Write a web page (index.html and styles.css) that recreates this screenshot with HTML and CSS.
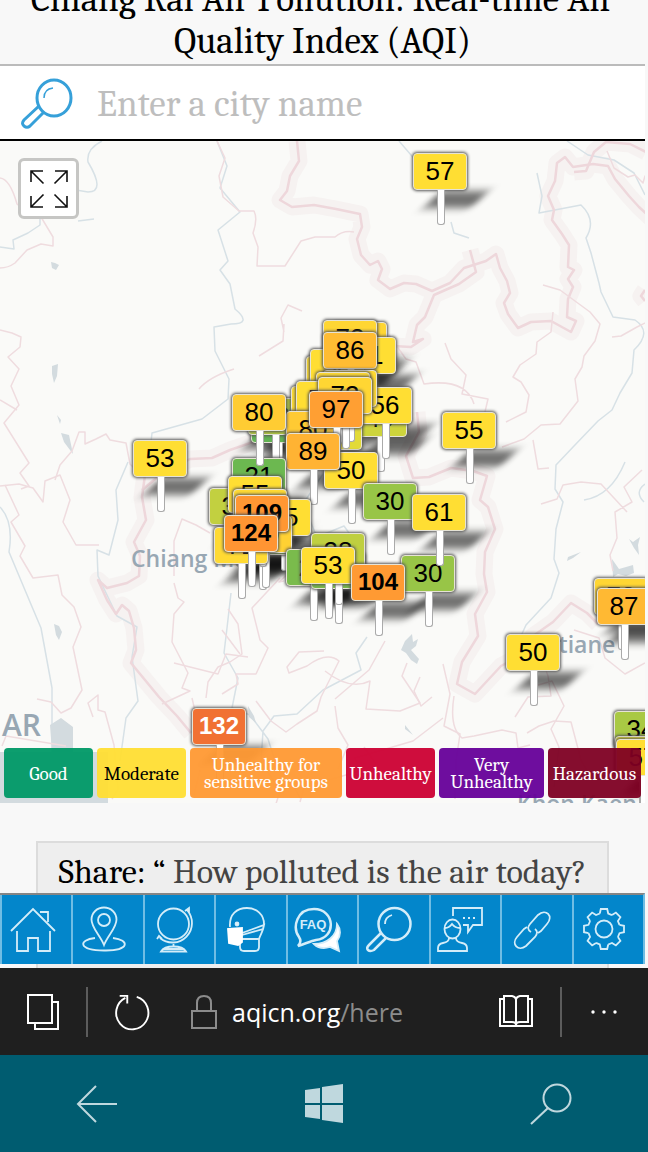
FILE: index.html
```html
<!DOCTYPE html>
<html lang="en">
<head>
<meta charset="utf-8">
<meta name="viewport" content="width=device-width, initial-scale=1">
<title>Chiang Rai Air Pollution: Real-time Air Quality Index (AQI)</title>
<link rel="stylesheet" href="styles.css">
</head>
<body>
<div class="phone">
  <main class="page">
    <header class="title"><h1>Chiang Rai Air Pollution: Real-time Air Quality Index (AQI)</h1></header>

    <form class="search">
      <label for="city" aria-label="City">
        <svg width="52" height="52" viewBox="0 0 52 52" fill="none" stroke="#36a0d9" stroke-width="3">
          <ellipse cx="33" cy="20" rx="17" ry="18"/>
          <path d="M23 34 9 48q-3 2.500-6 0t0-6L18 28"/>
          <path d="M23 20q0-9 9-10" stroke-width="1.500"/>
        </svg>
      </label>
      <input id="city" type="text" placeholder="Enter a city name">
    </form>

    <section class="map" aria-label="Air quality map">
      <svg class="terrain" viewBox="0 141 645 662" preserveAspectRatio="xMinYMin slice" fill="none" stroke-linejoin="round">
        <defs>
          <g id="country">
            <path d="M297 141l2 20-9 15-3 15-7 9 12 7 22-2 22 4 24 5 2 13-5 12 4 16 9 10 8-4 4 8-4 11 12 9 14-6 12 1 16 7 18-8 14-15 22-7 10-7 4 14 7 13 3 12-6 10 4 11 10 14 13-6 20-1 20 11 5-11-9-4 1-18 5-12-5-8 6-9-6-3 1-22-7-11-10-14 2-10-6-14 7-15 2-18 8-6 8 10 20-3 15 2 7 13 14 17 10 11 14 13 6 22q8 10 16-2v-14"/>
            <path d="M574 172l12-1 8-19 12-10 24 2 16 8"/>
            <path d="M470 250l6 22-17 12-25 11-9 22-8 8-4 17 10-3-12 8-36-2"/>
            <path d="M417 412l2 20-13 24 7 22 16-1 22-9 22 3 14 5-7 24 8 7 7 22-10 23-1 22 3 18-12 22 3 22-16 26-5 22 18 10 26-28 22-12 10-18 20-14 18-19 16 10 11 11"/>
            <path d="M145 475l-3 22 4 23-12 22 6 14-1 20-12 7-20 5-9-8 9 20 9 14 6-9 7 6 5 17 2 22-5 13 28 34 18 19 14 17"/>
            <path d="M142 490l18-15 30-16 22-1 18-8 26-9"/>
            <path d="M645 290l-4 6 4 5"/>
          </g>
        </defs>
        <use href="#country" stroke="#f6f2f1" stroke-width="17"/>
        <g stroke="#d7e1e6" stroke-width="1.500">
          <path d="M102 141q-16 8-14 21 18 30 0 30l-12-2m-36 27v8l-12 8-15 7 1 9-14-2m94-28-16 2"/>
          <path d="M217 141l10 25-7 22 20 24-22 18 10 31-8 9 10 14 5 25q18 15-4 15l-17 3 1 24 14 28-1 20-26 20-50 14-2 18"/>
          <path d="M399 141l18 21m34 60 3 11 15 5M567 141l21 14 26 5 20 13 11 22m-108-22 5 23-3 17 42-8q16 15 5 33l5 15 8 30 2 9 12 25 22 3q18 12-1 30l-2 23-12 20-8 17-14 11-24 25-18 19-1 24 8 13-7 27-2 30 5 14-8 25-25 27-5 11 3 23m101-197q-14 34-41 38"/>
          <path d="M128 462l-12 28 2 30-9 35-12-5 1 26 19 40 20 11-5 30 6 44-12 17-6 43M0 507q14 15 9 45l21 50 11 26 11 60v65m179-160-4 35-3 25 14 25-6 30 18 7 18 24 8 25m47-290-20 30 14 33 27-11 10 14m13 97-11 16 5 17-38 20-26 24-23 2-11 15-2 31 14 21m66-245 13 2 8 15M645 484q-11 8-1 18m-85 245-5 40m-265-10 11 21"/>
        </g>
        <g fill="#d3dbdf">
          <path d="M51 262l4 1 4 2-3 5-4-2zM52 366l6-2-1 12-3 7-2-9zM57 415l4 5-1 4zM61 433l8 2 4 19-9-12zM54 624l5 2 3 6-3 8-3-5zM50 725l11-7 12 9v25H52zM0 752h108v51H0z"/>
          <path d="M412 634l1 8 5-3-2 7-5 4 8 9-2 5-6-4-5-7-5-3 4-9zM612 559l7 10 14-4 1 8-8 3-8-2-5 3zM568 557l13-5-8 6-6 3zM629 539l4 3 7-5-2 8 1 10-5-7zM405 725l8 10-8-6zM248 706l6 10 2 7-7-6z"/>
        </g>
        <use href="#country" stroke="#eed7db" stroke-width="2.500"/>
        <g stroke="#efdcdf" stroke-width="1.500">
          <path d="M0 178q10 1 17 26l6 5m18 8 12 20v9l-12-2-14 6-12 13q-7 5-15 5M0 330l12 3 9 4-1 10-12 10 11 12-8 17 8 19-15 18 25 40-9 10 9 13-8 3M0 400l17 10m38 70 5-15 12-14 7-19h6v12l11-5 10-5 4 6 16 3 4 21 8 8M0 486l19-2 14 4 10 14 2-21 15-6 10 25-7 22 13 23h23"/>
          <path d="M5 485l14 30-8 7 14 24-5 10 13 22 25-3 4 20 12 12 7 20-8 20 9 43-11 18-10 5-10-11-14-3m56 18-5-14 10-8v15l7 2 9 33 4 44-6 10M2 746l4-10 60 10M217 141l8 17-6 18 4 21 16 14h15q4 8-1 22l5 14-1 19h28q9-14 16-25l14-4h20q8-7 19-5m-70 100-3-14 7-13 14 6m-18 13-1 17-24 15m-60 33q10-12 35-20"/>
          <path d="M174 576v-35l8-22 14 6 14 8m-36 50 4 15 6 4-10 12-2 28 16 31-6 15 8 3-28 13m30-6 6 26-4 8m34-123 10 15 4 30-12 8-12 5-10 15-2 16m74-120-28 30 8 32 8 8-12 26h-20l2 10-16 10m66-120-9 8 5-1m40 70-25 1-12 15 2 6 18-7q20-15 32-5l-18 36-4 14-20 13-11 8-15-11-15-20m54 66-10 35m35-103 34-29 16-29m-60 30q25 20 45 10l-4 28 34 2 20-8-18-27 5-13m-72 43 3 22 10 17-10 24m-20 14 42-12-5-13 58-17 30-23m0-54 7 30-6 32 16 8-4 27-1 38"/>
          <path d="M445 343l6 16 15 16-4 19 26 5-4 17m-10-12q-8-26-50-20l-8-22-10-3-17-24m164-23-2 20-14 10-1 12-16 11-7 12 8 5 8 13-3 17-20 10m37-137 17 5 30 22 10 12-5 17-11 15-2 11-7 12 3 22-18 23-19 1-17 14-22 8m110-110 9-1 16-9 16-8 3-18 7 4m-56-154 7 17 14 9 7-2 8 8 2-7 9 7-6 15 8 8M533 440l5 29 11-1m93 2-18 17 8 15-17 10 2 26-7 17 3 16m-72-67 16-5 6-14 18-3 20 2 26 28m-112 205 13-20 23-1-3-20q-6-20-18-13l-3 4m0 66 12-7 15-5 17 1 10 38 10 18M559 747l-8-18 13-23-12-25-17 5m110-23-20 11-20-16-6-20-25-8m-120 66q-5 32 8 42l12-2 28-6 14 3 2 15 12-3m-98-48-11 9-7-15 6-14m-172-20-22-3-8 20-44-11m66-9-18-24m-22 140-6 25m80 15 16-50 16 10m58-23 12 17"/>
        </g>
        <g class="places">
          <text x="131" y="567" font-size="23">Chiang Mai</text>
          <text x="510" y="653" font-size="23">Vientiane</text>
          <text x="517" y="812" font-size="23">Khon Kaen</text>
          <text x="2" y="736" font-size="30">AR</text>
        </g>
      </svg>

      <div class="pins">
        <span class="pin" style="--x:440;--y:83;--c:#ffde33">57</span>
        <span class="pin" style="--x:360;--y:252;--c:#ffd633">72</span>
        <span class="pin" style="--x:350;--y:250;--c:#ffd633">73</span>
        <span class="pin" style="--x:369;--y:267;--c:#ffde33">71</span>
        <span class="pin" style="--x:333;--y:286;--c:#ffde33">65</span>
        <span class="pin" style="--x:337;--y:279;--c:#ffde33">50</span>
        <span class="pin" style="--x:350;--y:262;--c:#ffbc33">86</span>
        <span class="pin" style="--x:380;--y:330;--c:#cdd43c">49</span>
        <span class="pin" style="--x:385;--y:317;--c:#ffde33">56</span>
        <span class="pin" style="--x:335;--y:343;--c:#e2da38">46</span>
        <span class="pin" style="--x:350;--y:300;--c:#ffda33">68</span>
        <span class="pin" style="--x:343;--y:302;--c:#ffda33">71</span>
        <span class="pin" style="--x:278;--y:336;--c:#62b354">18</span>
        <span class="pin" style="--x:275;--y:328;--c:#b5cc42">38</span>
        <span class="pin" style="--x:318;--y:316;--c:#ffde33">60</span>
        <span class="pin" style="--x:323;--y:311;--c:#ffde33">76</span>
        <span class="pin" style="--x:345;--y:307;--c:#ffd633">73</span>
        <span class="pin" style="--x:313;--y:341;--c:#ffca33">80</span>
        <span class="pin" style="--x:336;--y:321;--c:#ff9f33">97</span>
        <span class="pin" style="--x:351;--y:382;--c:#ffde33">50</span>
        <span class="pin" style="--x:313;--y:363;--c:#ffb333">89</span>
        <span class="pin" style="--x:259;--y:388;--c:#6cb850">21</span>
        <span class="pin" style="--x:259;--y:324;--c:#ffcc33">80</span>
        <span class="pin" style="--x:469;--y:342;--c:#ffde33">55</span>
        <span class="pin" style="--x:160;--y:370;--c:#ffde33">53</span>
        <span class="pin" style="--x:236;--y:418;--c:#c2d040">37</span>
        <span class="pin" style="--x:284;--y:429;--c:#ffde33">55</span>
        <span class="pin" style="--x:255;--y:406;--c:#ffde33">55</span>
        <span class="pin" style="--x:260;--y:419;--c:#ffda33">65</span>
        <span class="pin" style="--x:262;--y:448;--c:#8fc249">28</span>
        <span class="pin" style="--x:265;--y:446;--c:#ffd133">70</span>
        <span class="pin high" style="--x:262;--y:425;--c:#ff9733">109</span>
        <span class="pin" style="--x:241;--y:457;--c:#ffda33">71</span>
        <span class="pin high" style="--x:251;--y:445;--c:#ff9533">124</span>
        <span class="pin" style="--x:390;--y:413;--c:#98c547">30</span>
        <span class="pin" style="--x:428;--y:485;--c:#98c547">30</span>
        <span class="pin" style="--x:439;--y:424;--c:#ffde33">61</span>
        <span class="pin" style="--x:313;--y:479;--c:#7abb4c">24</span>
        <span class="pin" style="--x:338;--y:482;--c:#7abb4c">24</span>
        <span class="pin" style="--x:338;--y:463;--c:#bfcf40">38</span>
        <span class="pin" style="--x:328;--y:477;--c:#ffde33">53</span>
        <span class="pin high" style="--x:378;--y:494;--c:#ff9a33">104</span>
        <span class="pin" style="--x:533;--y:564;--c:#ffde33">50</span>
        <span class="pin" style="--x:621;--y:508;--c:#ffd633">73</span>
        <span class="pin" style="--x:624;--y:518;--c:#ffb933">87</span>
        <span class="pin high light" style="--x:219;--y:638;--c:#f17133">132</span>
        <span class="pin" style="--x:641;--y:641;--c:#a9c944">34</span>
        <span class="pin" style="--x:642;--y:666;--c:#e2da38">46</span>
        <span class="pin" style="--x:643;--y:669;--c:#ffde33">57</span>
      </div>

      <button class="expand" type="button" aria-label="Full screen">
        <svg width="38" height="38" viewBox="0 0 38 38" fill="none" stroke="#111" stroke-width="1.600">
          <path d="M13.500 13.500 1 1m0 11V1h12M24.500 13.500 37 1m0 11V1H25M13.500 24.500 1 37m0-11v11h12M24.500 24.500 37 37m0-11v11H25"/>
        </svg>
      </button>

      <ul class="legend">
        <li class="good">Good</li>
        <li class="moderate">Moderate</li>
        <li class="sensitive">Unhealthy for sensitive groups</li>
        <li class="unhealthy">Unhealthy</li>
        <li class="very">Very Unhealthy</li>
        <li class="hazardous">Hazardous</li>
      </ul>
    </section>

    <section class="share">Share: “ <span>How polluted is the air today?</span></section>

    <nav class="tools">
      <a href="#home" aria-label="Home"><svg viewBox="0 0 48 48"><path d="M2 25 24 3l22 22M8 25v20h11V32h10v13h12V25M31 6h8v10"/></svg></a>
      <a href="#here" aria-label="Here"><svg viewBox="0 0 48 48"><path d="M24 39C20 29 11.500 22 11.500 13.500a12.500 12 0 0 1 25 0C36.500 22 28 29 24 39z"/><circle cx="24" cy="14" r="6"/><path d="M15 32C-2 34-2 44 24 44.500S50 34 33 32"/></svg></a>
      <a href="#world" aria-label="World"><svg viewBox="0 0 48 48"><circle cx="21.500" cy="18" r="15.500"/><path d="M35 4A19.500 19.500 0 0 1 8 32M33 5l4-3v5M5 33l2-3 3 3M21.500 38v3"/><path d="M9 45.500q3-5 12.500-5t12.500 5zM13 43h17"/></svg></a>
      <a href="#mask" aria-label="Masks"><svg viewBox="0 0 48 48"><path d="M7 21C6 8 14 2 24 2c10 0 17 7 17 16 0 6-4 11-5 15v8q0 4-4 4H21q-4 0-4-4v-5M18 33h18M19 27l22-8-1 4-21 6"/><circle cx="14" cy="18" r="1.500" fill="#fff"/><path d="m5 23 14-1v14l-4 3-9-2z" fill="#fff" stroke="#fff"/></svg></a>
      <a href="#faq" aria-label="FAQ"><svg viewBox="0 0 48 48"><path d="M4 40c3-3 3-6 1-9C-2 21 3 3 20 3c21 0 23 29 2 31-5 1-9 3-18 6z" stroke-width="2.500"/><path d="M43 18c4 5 4 12 0 17l2 10-9-4c-6 2-12 1-16-3 13 0 23-8 23-20z" fill="#fff"/><text x="19" y="23">FAQ</text></svg></a>
      <a href="#search" aria-label="Search"><svg viewBox="0 0 48 48"><circle cx="28.500" cy="18" r="16" stroke-width="2.500"/><path d="M15 27 3 39q-3 3-1 5t6 0l12-12" stroke-width="2.500"/><path d="M19 18q0-7 7-9"/></svg></a>
      <a href="#contact" aria-label="Contact"><svg viewBox="0 0 48 48"><path d="M16 10V2h29v17h-9l-5 7v-7h-5M26 12h2m3 0h2m3 0h2"/><ellipse cx="15.500" cy="23" rx="8" ry="9.500"/><path d="M8 22q4 0 7-4 3 4 8 4M12 32q0 4-6 5-5 1-5 5v3h29v-3q0-4-5-5-6-1-6-5"/></svg></a>
      <a href="#links" aria-label="Links"><svg viewBox="0 0 48 48"><path d="M22 26q-5-3-1-8l8-9c8-7 16 1 9 9l-6 7-3 2M26 23q4 3 0 8l-9 9c-8 6-15-2-9-9l7-8 3-2"/></svg></a>
      <a href="#settings" aria-label="Settings"><svg viewBox="-24 -23 48 48"><defs><path id="tooth" d="M-4.200-15.500-3.200-20H3.200l1 4.500L8-13.900"/></defs><circle r="8.500"/><use href="#tooth"/><use href="#tooth" transform="rotate(45)"/><use href="#tooth" transform="rotate(90)"/><use href="#tooth" transform="rotate(135)"/><use href="#tooth" transform="rotate(180)"/><use href="#tooth" transform="rotate(225)"/><use href="#tooth" transform="rotate(270)"/><use href="#tooth" transform="rotate(315)"/></svg></a>
    </nav>
  </main>

  <div class="browser">
    <button type="button" aria-label="Tabs"><svg width="34" height="38" viewBox="0 0 34 38" fill="none" stroke="#fff" stroke-width="2"><path d="M2 2h24v28H2zM26 9h6v27H9v-6"/></svg></button>
    <i class="rule"></i>
    <button type="button" aria-label="Reload"><svg width="36" height="40" viewBox="-1 0 38 40" fill="none" stroke="#fff" stroke-width="2"><path d="M23 4a17 17.500 0 1 1-12 1M5 3h8v8"/></svg></button>
    <div class="address">
      <svg width="28" height="36" viewBox="0 0 28 36" fill="none" stroke="#8c8c8c" stroke-width="2"><path d="M2 17h24v17H2zM7 17V9q0-7 7-7t7 7v8"/></svg>
      <span class="url">aqicn.org<span>/here</span></span>
    </div>
    <button type="button" aria-label="Reading view"><svg width="36" height="36" viewBox="0 0 36 36" fill="none" stroke="#fff" stroke-width="2"><path d="M6 5H2v27h32V5h-4M6 2h8q4 1 4 4 0-3 4-4h8v26h-8q-4 0-4 3 0-3-4-3H6zM18 5v26"/></svg></button>
    <i class="rule"></i>
    <button type="button" aria-label="More"><svg width="28" height="6" viewBox="0 0 28 6" fill="#fff"><circle cx="3" cy="3" r="1.700"/><circle cx="14" cy="3" r="1.700"/><circle cx="25" cy="3" r="1.700"/></svg></button>
  </div>

  <div class="system">
    <button type="button" aria-label="Back"><svg width="42" height="42" viewBox="0 0 42 42" fill="none" stroke="#bfd8de" stroke-width="2"><path d="M20 3 2 21l18 18M2 21h39"/></svg></button>
    <button type="button" aria-label="Start"><svg width="40" height="42" viewBox="0 0 40 42" fill="#bfd8de"><path d="M1 7l15-2v15H1zM18 4l21-3v19H18zM1 22h15v14L1 34zM18 22h21v18l-21-3z"/></svg></button>
    <button type="button" aria-label="Search"><svg width="42" height="42" viewBox="0 0 42 42" fill="none" stroke="#bfd8de" stroke-width="2"><circle cx="27" cy="15" r="13.500"/><path d="M18 25 1 41"/></svg></button>
  </div>
</div>
</body>
</html>
```

FILE: styles.css
```css
* { box-sizing: border-box; }

body {
  margin: 0;
  background: #f8f8f8;
  font-family: Cambria, "Liberation Serif", serif;
  color: #000;
}

button {
  display: flex;
  align-items: center;
  justify-content: center;
  padding: 0;
  border: 0;
  background: none;
}

.phone {
  display: flex;
  flex-direction: column;
  height: 100vh;
}

.page {
  position: relative;
  flex: 1;
  min-height: 0;
  display: flex;
  flex-direction: column;
  padding-right: 3px;
  overflow: hidden;
}

.title {
  flex: none;
  display: flex;
  flex-direction: column;
  justify-content: flex-end;
  height: 64px;
  padding: 0 20px 2px;
  overflow: hidden;
}

.title h1 {
  margin: 0;
  font-size: 37px;
  font-weight: 400;
  line-height: 42px;
  text-align: center;
}

.search {
  flex: none;
  display: flex;
  align-items: center;
  gap: 24px;
  height: 77px;
  padding: 2px 0 0 21px;
  border-top: 2px solid #bbb;
  border-bottom: 2px solid #000;
  background: #fff;
}

.search label { display: flex; }

.search input {
  flex: 1;
  min-width: 0;
  padding: 0;
  border: 0;
  outline: 0;
  background: none;
  font: inherit;
  font-size: 37px;
}

.search input::placeholder { color: #bebebe; }

.map {
  position: relative;
  flex: 1;
  min-height: 0;
  overflow: hidden;
  background: #fafaf8;
}

.terrain {
  position: absolute;
  inset: 0;
  width: 100%;
  height: 100%;
}

.places {
  fill: #98a7b3;
  font-family: "Open Sans", sans-serif;
  font-weight: 600;
}

.pins {
  position: absolute;
  inset: 0;
  isolation: isolate;
}

/* Each pin stands with its foot on the point (--x, --y). */
.pin {
  position: absolute;
  left: calc(var(--x) * 1px - 27px);
  top: calc(var(--y) * 1px - 71px);
  width: 54px;
  height: 37px;
  border: 1px solid #e6e3d6;
  border-radius: 4px;
  background: var(--c);
  box-shadow: 0 0 3px 1px #555;
  font: 26px/34px "Liberation Sans", Arial, sans-serif;
  text-align: center;
}

/* Cast shadows stay beneath every pin, not only their own. */
.pin::before {
  content: "";
  position: absolute;
  z-index: -1;
  left: 18px;
  top: 37px;
  width: 48px;
  height: 17px;
  background: rgba(0, 0, 0, 0.55);
  filter: blur(4px);
  transform: skewX(-45deg);
}

.pin::after {
  content: "";
  position: absolute;
  left: 23px;
  top: 36px;
  width: 6px;
  height: 34px;
  border: 1px solid #aaa;
  border-top: 0;
  border-radius: 0 0 3px 3px;
  background: #fff;
}

.pin.high {
  font-size: 24px;
  font-weight: 700;
}

.pin.light { color: #fff; }

.expand {
  position: absolute;
  left: 18px;
  top: 17px;
  width: 61px;
  height: 61px;
  border: 3px solid #c6c6c4;
  border-radius: 6px;
  background: #fff;
}

.legend {
  position: absolute;
  left: 4px;
  right: 4px;
  bottom: 5px;
  display: grid;
  grid-template-columns: 89fr 89fr 152fr 89fr 105fr 93fr;
  gap: 4px;
  margin: 0;
  padding: 0;
  list-style: none;
  color: #fff;
  font-size: 19px;
  line-height: 17px;
  text-align: center;
}

.legend li {
  display: flex;
  align-items: center;
  justify-content: center;
  min-width: 0;
  height: 50px;
  padding-top: 2px;
  border-radius: 4px;
}

.legend .good { background: rgba(0, 153, 102, 0.95); }
.legend .moderate { background: rgba(255, 222, 51, 0.95); color: #000; }
.legend .sensitive { padding: 2px 10px 0; background: rgba(255, 153, 51, 0.95); }
.legend .unhealthy { background: rgba(204, 0, 51, 0.95); }
.legend .very { background: rgba(102, 0, 153, 0.95); }
.legend .hazardous { background: rgba(126, 0, 35, 0.95); }

.share {
  flex: none;
  height: 127px;
  margin: 38px 36px 0;
  padding: 8px 20px 0;
  border: 2px solid #dcdcdc;
  border-bottom: 0;
  background: #eee;
  font-size: 34px;
  line-height: 42px;
  text-align: center;
  white-space: nowrap;
}

.share span { color: #444; }

.tools {
  position: absolute;
  left: 0;
  right: 3px;
  bottom: 4px;
  display: grid;
  grid-template-columns: repeat(9, 1fr);
  height: 71px;
  border-top: 2px solid #858585;
  border-right: 2px solid #70bde4;
  background: #0386cb;
}

.tools a {
  display: flex;
  align-items: center;
  justify-content: center;
  padding-right: 8px;
  border-left: 2px solid #70bde4;
}

.tools svg {
  width: 48px;
  height: 48px;
  fill: none;
  stroke: #d4edf9;
  stroke-width: 1.8;
}

.tools text {
  fill: #d4edf9;
  stroke: none;
  font: bold 13px "Liberation Sans", Arial, sans-serif;
  text-anchor: middle;
}

.browser {
  flex: none;
  display: flex;
  align-items: center;
  height: 87px;
  padding: 0 30px 0 26px;
  background: #1f1f1f;
}

.rule {
  width: 2px;
  height: 50px;
  margin: 0 26px;
  background: #5c5c5c;
}

.browser .rule:nth-last-child(2) { margin-right: 28px; }

.address {
  flex: 1;
  display: flex;
  align-items: center;
  gap: 14px;
  padding-left: 40px;
}

.url {
  color: #fff;
  font: 25px/32px "Segoe UI", "Open Sans", sans-serif;
}

.url span { color: #8c8c8c; }

.system {
  flex: none;
  display: flex;
  align-items: center;
  justify-content: space-between;
  height: 97px;
  padding: 0 76px;
  background: #005c70;
}
```
